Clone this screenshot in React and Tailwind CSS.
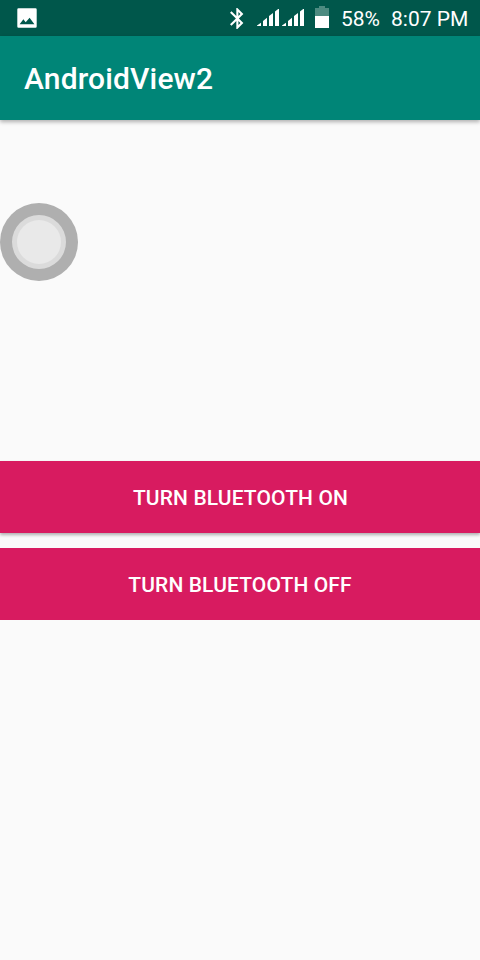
function PhotoIcon() {
  return (
    <svg className="block h-5 w-5" viewBox="0 0 20 20" aria-hidden="true">
      <path
        fill="#fff"
        fillRule="evenodd"
        d="M1.5 0.3h17Q19.7 0.3 19.7 1.5v17q0 1.2-1.2 1.2h-17q-1.2 0-1.2-1.2v-17Q0.3 0.3 1.5 0.3zM2.6 16.2h14.8l-4.8-6.4-3.9 4.4-2.3-2.9z"
      />
    </svg>
  );
}

function BluetoothIcon() {
  return (
    <svg className="block h-[21px] w-[14px]" viewBox="5 2 13.3 20" aria-hidden="true">
      <path
        fill="#fff"
        d="M17.71 7.71 12 2h-1v7.59L6.41 5 5 6.41 10.59 12 5 17.59 6.41 19 11 14.41V22h1l5.71-5.71-4.3-4.29 4.3-4.29zM13 5.83l1.88 1.88L13 9.59V5.83zm1.88 10.46L13 18.17v-3.76l1.88 1.88z"
      />
    </svg>
  );
}

function SignalIcon() {
  return (
    <svg className="block h-[17px] w-[22px]" viewBox="0 0 22 17" aria-hidden="true">
      <path
        fill="#fff"
        d="M0 17V16.5L4 13.7V17zM6 17V11.9L10 8.7V17zM12 17V7.1L16 3.9V17zM18 17V2.6L21.2 0H22V17z"
      />
    </svg>
  );
}

function BatteryIcon() {
  return (
    <svg className="block h-[22px] w-[14px]" viewBox="0 0 14 22" aria-hidden="true">
      <path fill="#4d8b81" d="M4 0h6v2h4v8H0V2h4z" />
      <path fill="#fff" d="M0 10h14v12H0z" />
    </svg>
  );
}

function StatusBar() {
  return (
    <header className="flex h-9 items-start bg-[#00574b] pl-[17px] text-white">
      <div className="pt-2">
        <PhotoIcon />
      </div>
      <div className="ml-auto flex items-start pr-3">
        <div className="mr-[13px] pt-2">
          <BluetoothIcon />
        </div>
        <div className="mr-[11px] flex gap-[3px] pt-[9px]">
          <SignalIcon />
          <SignalIcon />
        </div>
        <div className="pt-1.5">
          <BatteryIcon />
        </div>
        <span className="ml-3 w-[50px] whitespace-nowrap pt-[7px] text-[21px] leading-6">58%</span>
        <span className="w-[77px] whitespace-nowrap pt-[7px] text-[21px] leading-6">8:07 PM</span>
      </div>
    </header>
  );
}

export default function App() {
  return (
    <div className="relative flex h-[960px] w-[480px] flex-col overflow-hidden bg-[#fafafa] font-['Roboto',sans-serif]">
      <StatusBar />
      <div className="flex h-[84px] items-center bg-[#008577] pl-6 pt-0.5 shadow-[0_2px_4px_rgba(0,0,0,0.3)]">
        <h1 className="text-[30px] font-medium leading-9 tracking-[0.15px] text-white">AndroidView2</h1>
      </div>
      <main className="flex flex-col gap-[15px] pt-[341px]">
        <button className="h-[72px] bg-[#d81b60] pl-px pt-0.5 text-[21px] font-medium leading-6 tracking-[0.12px] text-white shadow-[0_2px_3px_rgba(0,0,0,0.3)]">
          TURN BLUETOOTH ON
        </button>
        <button className="h-[72px] bg-[#d81b60] pt-0.5 text-[21px] font-medium leading-6 tracking-[0.12px] text-white">
          TURN BLUETOOTH OFF
        </button>
      </main>
      <div className="absolute left-0 top-[203px] flex h-[78px] w-[78px] items-center justify-center rounded-full bg-[#afafaf]">
        <div className="flex h-[54px] w-[54px] items-center justify-center rounded-full bg-[#dbdbdb]">
          <div className="h-11 w-11 rounded-full bg-[#e9e9e9]" />
        </div>
      </div>
    </div>
  );
}
